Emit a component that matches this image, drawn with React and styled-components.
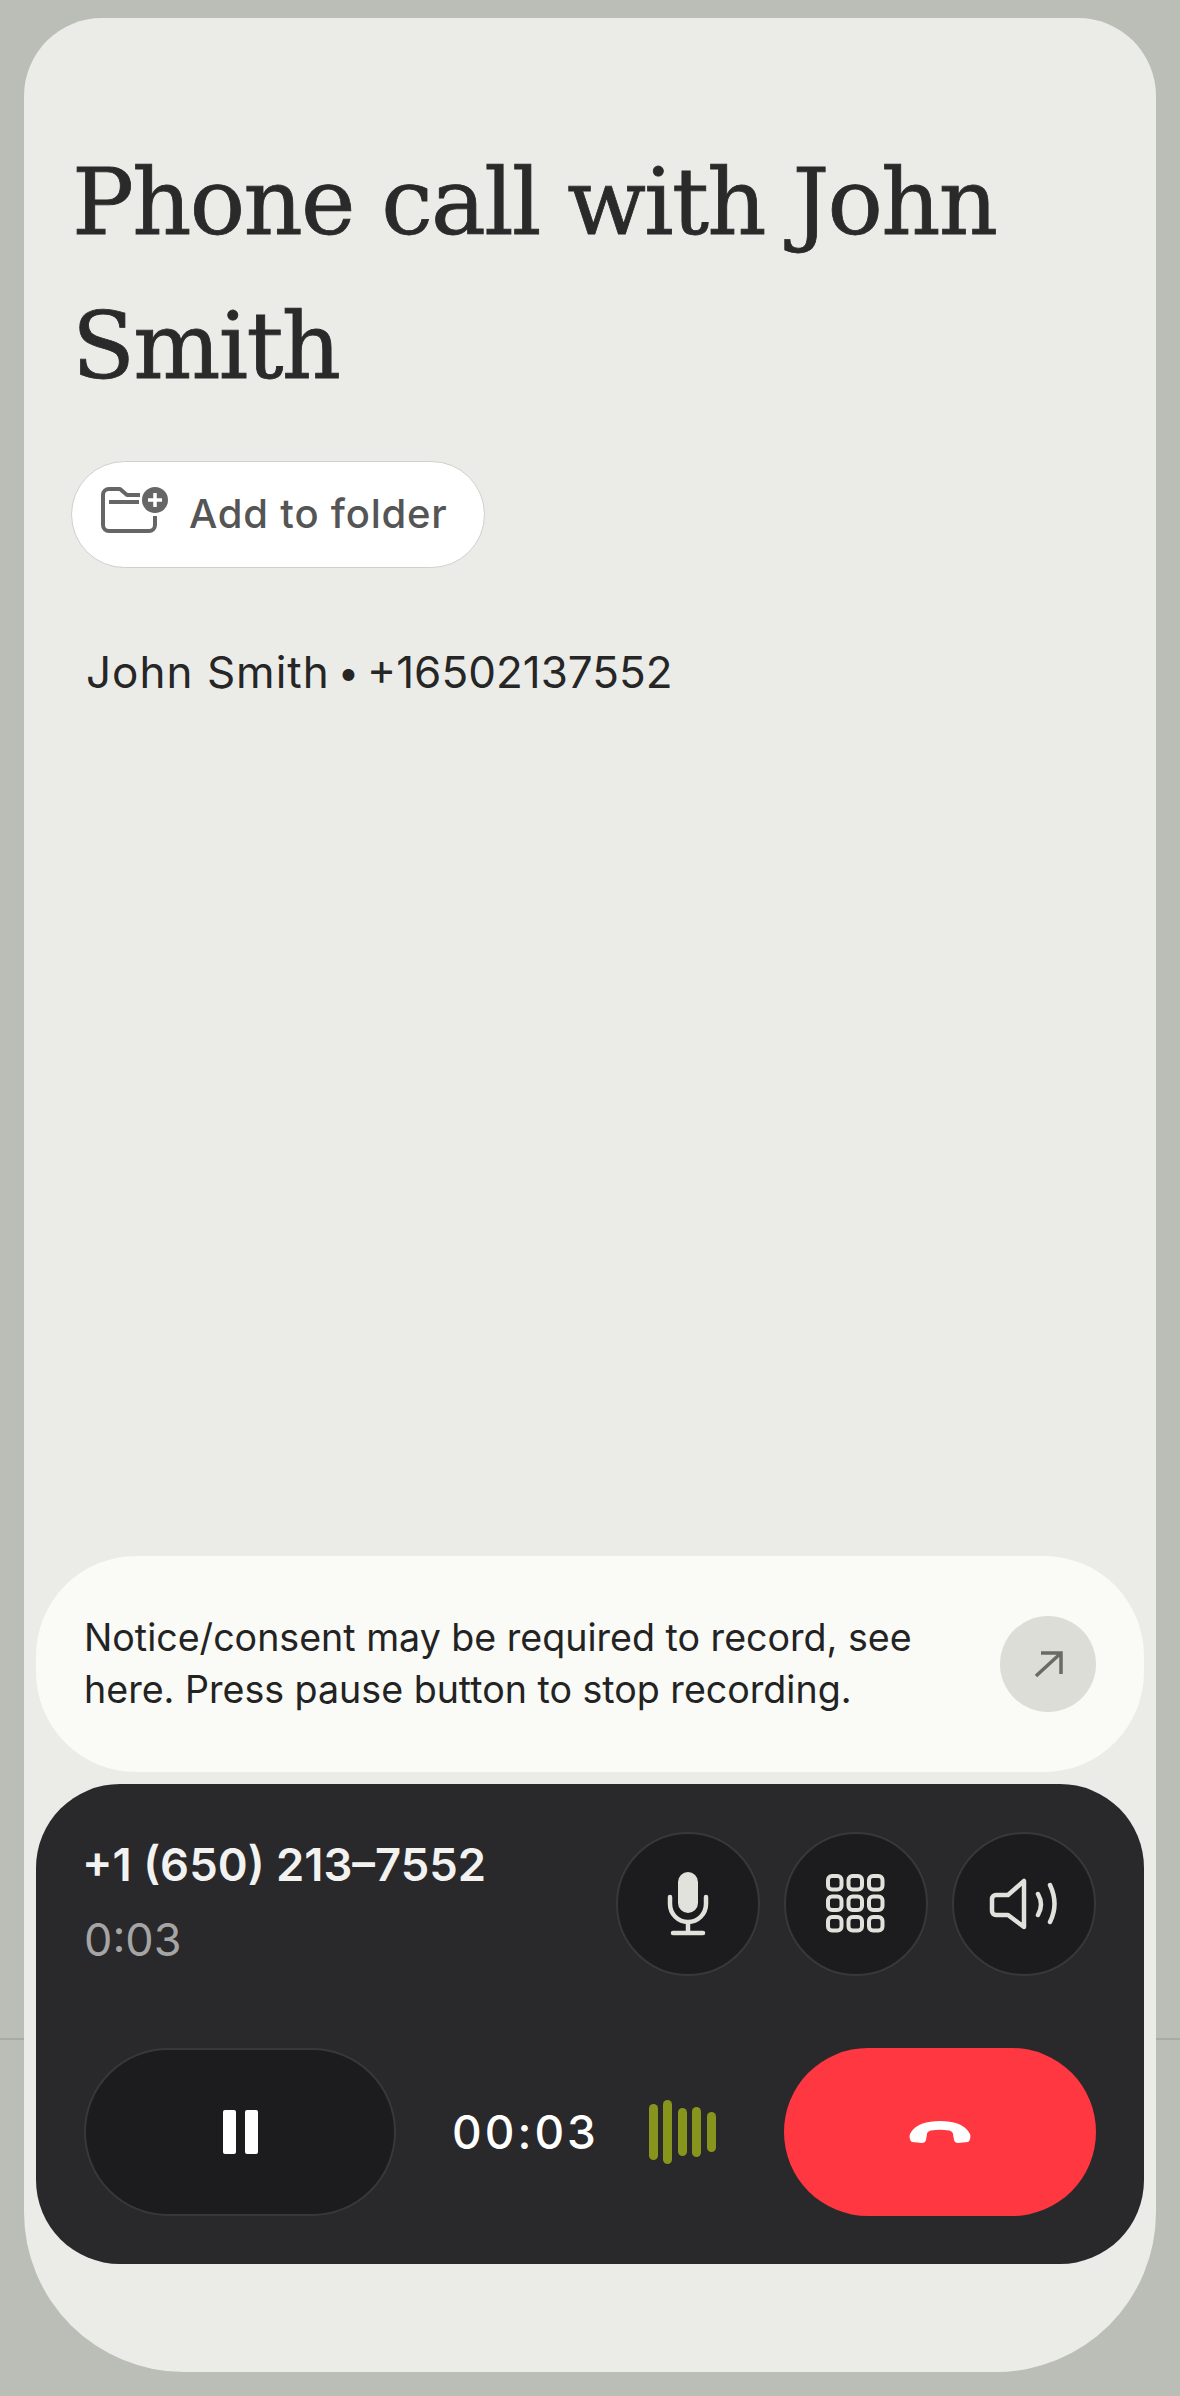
import styled, { createGlobalStyle } from 'styled-components';

const GlobalStyle = createGlobalStyle`
  html, body {
    margin: 0;
    padding: 0;
    background: #BBBDB7;
  }
  * {
    box-sizing: border-box;
  }
`;

const Page = styled.div`
  position: relative;
  width: 1180px;
  height: 2396px;
  padding: 18px 24px 24px;
  overflow: hidden;
  background: #BBBDB7;
  font-family: Inter, "Liberation Sans", sans-serif;
`;

// line of the page behind the card
const BackLine = styled.div`
  position: absolute;
  left: 0;
  right: 0;
  top: 2038px;
  height: 2px;
  background: #A9ABA6;
`;

const Card = styled.main`
  position: relative;
  height: 100%;
  display: flex;
  flex-direction: column;
  padding: 0 12px 108px;
  background: #EBECE8;
  border-radius: 78px 78px 160px 160px / 78px 78px 160px 160px;
`;

const Header = styled.header`
  padding: 113px 0 0 36px;
`;

const Title = styled.h1`
  margin: 0;
  max-width: 1000px;
  font-family: "DejaVu Serif", serif;
  font-size: 92px;
  font-weight: 400;
  line-height: 144px;
  letter-spacing: -1.7px;
  -webkit-text-stroke: 0.8px #2A2A2A;
  color: #2A2A2A;
`;

const FolderButton = styled.button`
  display: flex;
  align-items: center;
  gap: 18px;
  width: 414px;
  height: 107px;
  margin: 42px 0 0 -1px;
  padding: 0 0 3px 27px;
  border: 1.5px solid #CFCFCB;
  border-radius: 54px;
  background: #FFFFFF;
  font-family: inherit;
  font-size: 40px;
  font-weight: 500;
  letter-spacing: 0.8px;
  color: #555555;
`;

const Contact = styled.p`
  display: flex;
  align-items: center;
  gap: 8px;
  margin: 78px 0 0 14px;
  font-size: 44px;
  line-height: 52px;
  color: #262626;
`;

const ContactName = styled.span`
  letter-spacing: 1px;
`;

const Separator = styled.span`
  font-size: 38px;
`;

const Bottom = styled.div`
  margin-top: auto;
  display: flex;
  flex-direction: column;
  gap: 12px;
`;

const Notice = styled.section`
  display: flex;
  align-items: center;
  justify-content: space-between;
  height: 216px;
  padding: 0 48px;
  background: #FAFAF6;
  border-radius: 100px;
`;

const NoticeText = styled.p`
  margin: 0;
  width: 860px;
  font-size: 37.6px;
  line-height: 52px;
  color: #232323;
`;

const ArrowButton = styled.button`
  display: flex;
  align-items: center;
  justify-content: center;
  flex: none;
  width: 96px;
  height: 96px;
  padding: 0;
  border: 0;
  border-radius: 50%;
  background: #DDDDD7;
`;

const CallPanel = styled.section`
  display: flex;
  flex-direction: column;
  justify-content: space-between;
  height: 480px;
  padding: 48px;
  background: #29282B;
  border-radius: 84px;
`;

const Row = styled.div`
  display: flex;
  align-items: center;
  justify-content: space-between;
`;

const CallInfo = styled.div`
  display: flex;
  flex-direction: column;
  gap: 23px;
  margin-top: -3px;
`;

const PhoneNumber = styled.div`
  font-size: 45.4px;
  font-weight: 600;
  line-height: 52px;
  margin-left: -2px;
  color: #F2F2F0;
`;

const Elapsed = styled.div`
  font-size: 45px;
  line-height: 52px;
  color: #A5A5A5;
`;

const RoundButtons = styled.div`
  display: flex;
  gap: 24px;
`;

const RoundButton = styled.button`
  display: flex;
  align-items: center;
  justify-content: center;
  width: 144px;
  height: 144px;
  padding: 0;
  border: 2px solid #38373A;
  border-radius: 50%;
  background: #1C1B1D;
`;

const WideButton = styled.button`
  display: flex;
  align-items: center;
  justify-content: center;
  width: 312px;
  height: 168px;
  padding: 0;
  border: ${(p) => (p.$danger ? '0' : '2px solid #38373A')};
  border-radius: 84px;
  background: ${(p) => (p.$danger ? '#FF3741' : '#1C1B1D')};
`;

const Recording = styled.div`
  display: flex;
  align-items: center;
  gap: 50px;
  margin-right: 12px;
`;

const Timer = styled.span`
  font-size: 46px;
  font-weight: 500;
  letter-spacing: 3px;
  color: #FFFFFF;
`;

const Wave = styled.div`
  display: flex;
  align-items: center;
  gap: 5.5px;
`;

const WaveBar = styled.span`
  width: 9px;
  height: ${(p) => p.$h}px;
  border-radius: 5px;
  background: #87951C;
`;

const PauseIcon = styled.div`
  display: flex;
  gap: 9px;
`;

const PauseBar = styled.span`
  width: 13px;
  height: 44px;
  border-radius: 2px;
  background: #FFFFFF;
`;

const FolderIcon = () => (
  <svg width="72" height="60" viewBox="0 0 72 60" fill="none">
    <path
      d="M41 12H28L21 6H10a6 6 0 0 0-6 6v30a6 6 0 0 0 6 6h40a6 6 0 0 0 6-6V33"
      stroke="#666"
      strokeWidth="4"
      strokeLinejoin="round"
    />
    <path d="M10 19H40" stroke="#666" strokeWidth="4" />
    <circle cx="56" cy="17" r="13" fill="#666" />
    <path d="M56 10V24M49 17H63" stroke="#fff" strokeWidth="3.5" />
  </svg>
);

const ArrowIcon = () => (
  <svg width="40" height="40" viewBox="0 0 40 40" fill="none" stroke="#6A6A67" strokeWidth="3.5">
    <path d="M8 32L33 9M13 9H33V30" />
  </svg>
);

const MicIcon = () => (
  <svg width="64" height="64" viewBox="0 0 64 64" fill="none">
    <rect x="22" y="0" width="20" height="41" rx="10" fill="#E2E2DC" />
    <path
      d="M14 25v7a18 18 0 0 0 36 0v-7M32 50V61M17 61H47"
      stroke="#E2E2DC"
      strokeWidth="4.5"
      strokeLinecap="round"
    />
  </svg>
);

const KEYPAD = [4, 24.5, 45];

const KeypadIcon = () => (
  <svg width="64" height="64" viewBox="0 0 64 64" fill="none" stroke="#E2E2DC" strokeWidth="4">
    {KEYPAD.map((y) =>
      KEYPAD.map((x) => <rect key={`${x}-${y}`} x={x} y={y} width="13.5" height="13.5" rx="4" />)
    )}
  </svg>
);

const SpeakerIcon = () => (
  <svg width="72" height="72" viewBox="0 0 72 72" fill="none" stroke="#E2E2DC" strokeWidth="4.5" strokeLinecap="round" strokeLinejoin="round">
    <path d="M36 13V59L20 47H8a4 4 0 0 1-4-4V31a4 4 0 0 1 4-4H20Z" />
    <path d="M50 26Q56 36.5 50 47M62 17Q71 36 62 54" />
  </svg>
);

const HangUpIcon = () => (
  <svg width="62" height="24" viewBox="0 0 62 24" fill="#fff">
    <path d="M1 14C6 4 18 1 31 1S56 4 61 14C62 17 61 21 59 22L49 23C47 23 45.5 22 45 20L44 14C44 12 42 11 40 10.5C34 9.5 28 9.5 22 10.5C20 11 18 12 18 14L17 20C16.5 22 15 23 13 23L3 22C1 21 0 17 1 14Z" />
  </svg>
);

const BARS = [56, 64, 48, 50, 40];

const App = () => {
  return (
    <Page>
      <GlobalStyle />
      <BackLine />
      <Card>
        <Header>
          <Title>Phone call with John Smith</Title>
          <FolderButton>
            <FolderIcon />
            Add to folder
          </FolderButton>
          <Contact>
            <ContactName>John Smith</ContactName>
            <Separator>•</Separator>
            <span>+16502137552</span>
          </Contact>
        </Header>

        <Bottom>
          <Notice>
            <NoticeText>
              Notice/consent may be required to record, see here. Press pause button to stop recording.
            </NoticeText>
            <ArrowButton>
              <ArrowIcon />
            </ArrowButton>
          </Notice>

          <CallPanel>
            <Row>
              <CallInfo>
                <PhoneNumber>+1 (650) 213–7552</PhoneNumber>
                <Elapsed>0:03</Elapsed>
              </CallInfo>
              <RoundButtons>
                <RoundButton>
                  <MicIcon />
                </RoundButton>
                <RoundButton>
                  <KeypadIcon />
                </RoundButton>
                <RoundButton>
                  <SpeakerIcon />
                </RoundButton>
              </RoundButtons>
            </Row>
            <Row>
              <WideButton>
                <PauseIcon>
                  <PauseBar />
                  <PauseBar />
                </PauseIcon>
              </WideButton>
              <Recording>
                <Timer>00:03</Timer>
                <Wave>
                  {BARS.map((h, i) => (
                    <WaveBar key={i} $h={h} />
                  ))}
                </Wave>
              </Recording>
              <WideButton $danger>
                <HangUpIcon />
              </WideButton>
            </Row>
          </CallPanel>
        </Bottom>
      </Card>
    </Page>
  );
};

export default App;
